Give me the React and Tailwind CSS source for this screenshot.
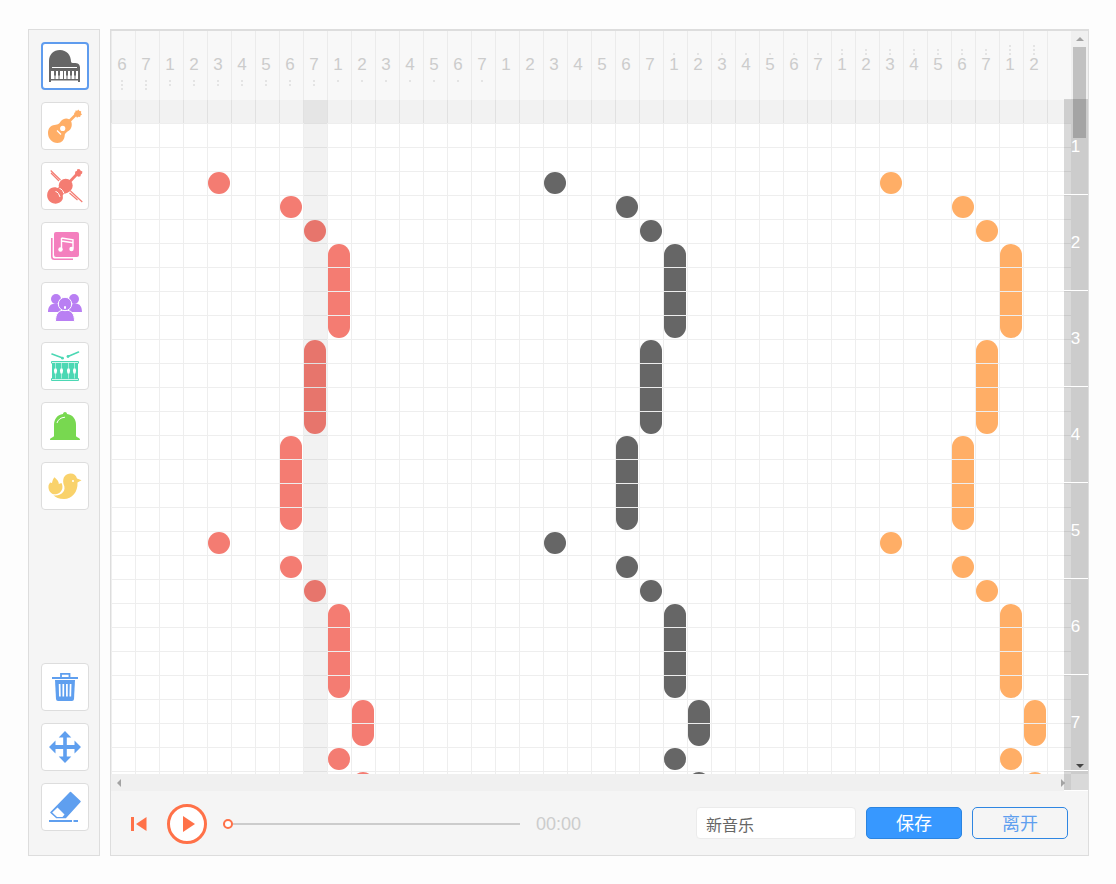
import React, { useState } from "react";

const VOICES = [
  { id: "violin", start: 4, fill: "bg-[#f47c72]" },
  { id: "piano", start: 18, fill: "bg-[#666666]" },
  { id: "guitar", start: 32, fill: "bg-[#ffae66]" },
];

// [column offset, row, length in rows]
const MELODY = [
  [0, 3, 1], [3, 4, 1], [4, 5, 1], [5, 6, 4], [4, 10, 4], [3, 14, 4],
  [0, 18, 1], [3, 19, 1], [4, 20, 1], [5, 21, 4], [6, 25, 2], [5, 27, 1], [6, 28, 1],
];

// Degrees of the scale, with the octave: negative below, positive above
const PITCHES = [
  ...[6, 7].map((n) => [n, -3]),
  ...[-2, -1, 0, 1, 2].flatMap((o) => [1, 2, 3, 4, 5, 6, 7].map((n) => [n, o])),
  ...[1, 2].map((n) => [n, 3]),
];

function Svg({ children, className }) {
  return (
    <svg viewBox="6 6 36 36" className={"size-9 shrink-0 " + className} fill="currentColor" aria-hidden="true">
      {children}
    </svg>
  );
}

const INSTRUMENTS = [
  {
    name: "钢琴",
    icon: (
      <Svg className="text-[#666]">
        <path d="M8 26V19C8 12.500 12.500 8 19 8S30 13 30 19.500C30 20.700 31 21 33 21C37 21 39 22.300 39 26Z" />
        <path d="M8 25h31v15h-2v-1.500H10V40H8Z" />
        <path fill="#fff" d="M11 25h25v1H11ZM10 29h27v8H10Z" />
        <path d="M13 29h2v4.500h-.5v4h-1v-4H13ZM17 29h2v4.500h-.5v4h-1v-4H17ZM22 29h1v8.500h-1ZM25 29h2v4.500h-.5v4h-1v-4H25ZM29 29h2v4.500h-.5v4h-1v-4H29ZM33 29h2v4.500h-.5v4h-1v-4H33Z" />
      </Svg>
    ),
  },
  {
    name: "吉他",
    icon: (
      <Svg className="text-[#ffae66]">
        <path d="M27 20.500l9-9" stroke="currentColor" strokeWidth="2.600" />
        <path d="M33 11l1.300-.7.2-1.800 1.800.2L37.200 7.500l1.300 1.500 1.700.3-.2 1.900 1 1.300-1.500 1-.4 1.500-1.700-.2-1.400 1-1-1.500-1.800-.5.3-1.500Z" />
        <path d="M20 19C22 16.500 25.500 15.800 28 17.200C31.300 19 31.600 24 29.500 27C27.500 29.800 24 30 23.700 33.500C23.500 38 20.500 41 16.500 41C11 41 7 36.500 7 31C7 26.500 9.500 23.500 13.500 23C17.500 22.600 18.500 21.500 20 19Z" />
        <circle cx="21.700" cy="26.400" r="2.600" fill="#fff" />
        <path d="M16 28.500l4 4" stroke="#fff" strokeWidth="1.200" />
      </Svg>
    ),
  },
  {
    name: "小提琴",
    icon: (
      <Svg className="text-[#f47c72]">
        <path d="M28 20.500l9-9.500" stroke="currentColor" strokeWidth="2.800" />
        <path d="M34 11.500l.3-2 1.500-.5.700-2 2.200.3 1 1.500 1.700.7-.3 2-1.300 1-.3 1.700-2 .5-1.500-.7Z" />
        <circle cx="24.700" cy="23.800" r="7" />
        <path d="M19 22C18.500 24.500 17.500 26.500 15.800 25.800C13.500 24.800 9.500 25.500 7.500 28.500C5 32.500 6 37.500 9.500 40C13.500 42.800 19.500 42 21.500 37.500C22.500 35 21 33.500 22.500 32.300C23.500 31.500 25.500 31.500 27 30.500Z" />
        <path d="M14.500 29.500l1.500.5 1.500 1.500 1.500 3.500M18.500 26.500l1.500.5 1.500 1.500 1.500 3" fill="none" stroke="#fff" strokeWidth="1" />
        <path d="M9.700 8.500l9.800 9.500M10 11l8 8M29.500 29L41.300 40M28.500 31l8 7" fill="none" stroke="currentColor" strokeWidth="1.200" />
      </Svg>
    ),
  },
  {
    name: "合成器",
    icon: (
      <Svg className="text-[#f47fbe]">
        <rect x="13" y="10" width="25" height="25" rx="2" />
        <path d="M10.800 16v18.500q0 2.700 2.700 2.700H32" fill="none" stroke="currentColor" strokeWidth="1.600" />
        <path d="M20.500 16l11.500 1.800v8.700M20.500 16v11.500M20.500 19l11.500 1.800" fill="none" stroke="#fff" strokeWidth="1.400" />
        <circle cx="19.500" cy="27.500" r="2.200" fill="#fff" />
        <circle cx="30.500" cy="27" r="2.200" fill="#fff" />
      </Svg>
    ),
  },
  {
    name: "合唱",
    icon: (
      <Svg className="text-[#b97ff3]">
        <circle cx="15" cy="17" r="5" />
        <circle cx="33" cy="17" r="5" />
        <path d="M7 30c0-5 2.500-8.500 7-8.500s8 3 8 8.500ZM27 30c0-5 3-8.500 7.500-8.500S41 25 41 30Z" />
        <path d="M14.500 39.500c0-8 3-11.500 9.500-11.500s9.500 3.500 9.500 11.500Z" stroke="#fff" strokeWidth="1" />
        <circle cx="24" cy="22" r="6.700" stroke="#fff" strokeWidth="1" />
        <rect x="23" y="24" width="2" height="3" rx="1" fill="#fff" />
      </Svg>
    ),
  },
  {
    name: "鼓",
    icon: (
      <Svg className="text-[#4cd8b4]">
        <path d="M11 12l10 3.800M27 14.500l10.500-4.500" stroke="currentColor" strokeWidth="1.600" strokeLinecap="round" />
        <circle cx="21.500" cy="16.200" r="1.400" />
        <circle cx="27" cy="14.500" r="1.400" />
        <path d="M11 19h26q1 0 1 1v1q0 .5-1 .5v14.500q1 0 1 1v1q0 1-1 1H11q-1 0-1-1v-1q0-1 1-1V21.500q-1 0-1-.5v-1q0-1 1-1Z" />
        <path d="M11 20h26v.8H11ZM11 37.200h26v.8H11Z" fill="#fff" />
        <path d="M14.500 21v15.500M20.500 21v15.500M27.500 21v15.500M33.500 21v15.500" stroke="#fff" strokeWidth=".5" />
        <path d="M13.500 26.500h2l.6 2-.6 3h-2l-.6-3ZM19.500 26.500h2l.6 2-.6 3h-2l-.6-3ZM26.500 26.500h2l.6 2-.6 3h-2l-.6-3ZM32.500 26.500h2l.6 2-.6 3h-2l-.6-3Z" fill="#fff" />
      </Svg>
    ),
  },
  {
    name: "铃",
    icon: (
      <Svg className="text-[#78d850]">
        <path d="M22 12c0-2.700 4-2.700 4 0 6 1 9 5 9 11v11c.5 2 4 1 4 4H9c0-3 3.500-2 4-4V23c0-6 3-10 9-11Z" />
        <path d="M16 21c.8-3 3.500-5.500 8-5.800" fill="none" stroke="#fff" strokeWidth="1" />
      </Svg>
    ),
  },
  {
    name: "鸟",
    icon: (
      <Svg className="text-[#f9d26b]">
        <path d="M22.500 22C21 15 25 11.500 29.500 11.500C33 11.500 35 13 36 16.500L40.500 18.300L36.500 20.500C37 30 31 37 23 37C18 37 14.500 35.500 12.500 33.300C20 34.500 26 29 22.500 22Z" />
        <path d="M9 20.500L11 21C11.500 18.500 12 17 13.500 15.300C16 17.500 18 19.500 17.800 22L20.500 21C23.200 26 20 31.800 15 32.300C10 32.800 7 28.500 7.500 24C7.600 22.500 8.500 22 9 20.500Z" />
        <circle cx="32" cy="19" r="1" fill="#fff" />
      </Svg>
    ),
  },
];

const TOOLS = [
  {
    name: "删除",
    icon: (
      <Svg className="text-[#5f9fef]">
        <path d="M20 14v-3.200h8.500V14M11 15h26" fill="none" stroke="currentColor" strokeWidth="1.800" />
        <path d="M14 17h20l-1 19q-.2 2-2 2H17q-1.800 0-2-2Z" />
        <path d="M18.600 21l.3 12.500M22.300 21v12.500M25.900 21v12.500M29.600 21l-.3 12.500" stroke="#fff" strokeWidth="1.700" />
      </Svg>
    ),
  },
  {
    name: "移动",
    icon: (
      <Svg className="text-[#5f9fef]">
        <path d="M24 8l6.300 6.500h-4.500V22h7.700v-4.500L40 24l-6.500 6.500V26h-7.700v7.500h4.500L24 40l-6.300-6.500h4.500V26h-7.700v4.500L8 24l6.500-6.500V22h7.700v-7.500h-4.500Z" />
      </Svg>
    ),
  },
  {
    name: "橡皮擦",
    icon: (
      <Svg className="text-[#5f9fef]">
        <path d="M29.500 9.500L39 18.500 24.500 34.500H15.500L10 29.500Z" stroke="currentColor" strokeWidth="1.600" strokeLinejoin="round" />
        <path d="M16.500 24.500l7 7-2 2.500h-5.500L11.200 29.500Z" fill="#fff" />
        <path d="M8 38h23M32.500 38H37" stroke="currentColor" strokeWidth="1.800" />
      </Svg>
    ),
  },
];

function IconButton({ name, selected, onClick, children }) {
  return (
    <button
      type="button"
      aria-label={name}
      aria-pressed={selected}
      onClick={onClick}
      className={
        "flex size-12 items-center justify-center rounded bg-white " +
        (selected ? "border-2 border-[#5f9cee]" : "border border-[#dddddd]")
      }
    >
      {children}
    </button>
  );
}

function Dots({ count }) {
  return Array.from({ length: count }, (_, i) => (
    <span key={i} className="size-[2px] rounded-full bg-[#dedede]" />
  ));
}

function Pitch({ degree, octave }) {
  return (
    <div className="flex flex-col items-center border-l border-[#ebebeb] pr-[3px]">
      <div className="flex h-6 flex-col justify-end gap-[2px]">
        <Dots count={Math.max(octave, 0)} />
      </div>
      <span className="h-[25px] text-center text-[17px] leading-5">{degree}</span>
      <div className="flex flex-col gap-[2px]">
        <Dots count={Math.max(-octave, 0)} />
      </div>
    </div>
  );
}

function Measures() {
  return (
    <div className="pointer-events-none absolute right-0 top-[68px] bottom-0 w-6 overflow-hidden bg-black/15">
      <ol className="text-center text-[17px] text-white">
        {[1, 2, 3, 4, 5, 6, 7].map((n) => (
          <li key={n} className="flex h-24 items-center justify-center border-b border-white pr-px">
            {n}
          </li>
        ))}
      </ol>
      <div className="h-5 border-b border-white" />
    </div>
  );
}

export default function App() {
  const [instrument, setInstrument] = useState(0);
  const [title, setTitle] = useState("新音乐");
  return (
    <div className="flex h-screen min-h-[640px] gap-[10px] bg-[#fdfdfd] pt-[29px] pr-[27px] pb-7 pl-7 font-['Liberation_Sans','Noto_Sans_CJK_SC',sans-serif]">
      <aside className="flex w-[72px] shrink-0 flex-col justify-between border border-[#dddddd] bg-[#f5f5f5] pt-3 pb-6 pl-3">
        <div className="flex flex-col gap-3">
          {INSTRUMENTS.map((item, i) => (
            <IconButton key={item.name} name={item.name} selected={i === instrument} onClick={() => setInstrument(i)}>
              {item.icon}
            </IconButton>
          ))}
        </div>
        <div className="flex flex-col gap-3">
          {TOOLS.map((item) => (
            <IconButton key={item.name} name={item.name}>
              {item.icon}
            </IconButton>
          ))}
        </div>
      </aside>

      <main className="flex min-w-0 flex-1 flex-col border border-t-2 border-[#dddddd] bg-[#f5f5f5]">
        <div className="relative flex min-h-0 flex-1">
          <div className="flex min-w-0 flex-1 flex-col">
            <section className="flex min-h-0 flex-1 flex-col overflow-hidden bg-white">
              <header className="grid h-[69px] shrink-0 grid-cols-[repeat(40,24px)] bg-[#f8f8f8] text-[#cccccc]">
                {PITCHES.map(([n, o]) => (
                  <Pitch key={n + "/" + o} degree={n} octave={o} />
                ))}
                <div className="border-l border-[#ebebeb]" />
              </header>
              <div className="relative min-h-0 flex-1 overflow-hidden">
                <div className="grid auto-rows-[24px] grid-cols-[repeat(40,24px)]">
                  {VOICES.map((v) =>
                    MELODY.map(([c, r, len]) => (
                      <div
                        key={v.id + r}
                        className={"mx-px mb-[2px] rounded-full " + v.fill}
                        style={{ gridColumn: v.start + c + 1, gridRow: `${r + 1} / span ${len}` }}
                      />
                    ))
                  )}
                </div>
                <div className="absolute inset-0 bg-[linear-gradient(to_right,#eeeeee_1px,transparent_1px),linear-gradient(to_bottom,transparent_23px,#eeeeee_23px)] bg-[size:24px_24px]" />
                <div className="absolute inset-x-0 top-0 h-[23px] bg-black/5" />
                <div className="absolute inset-y-0 left-[193px] w-[23px] bg-black/5" />
              </div>
            </section>
            <div className="flex h-[17px] shrink-0 items-center justify-between bg-[#f0f0f0] px-[6px] text-[#a3a3a3]">
              <svg viewBox="0 0 4 8" className="h-2 w-1" fill="currentColor" aria-hidden="true"><path d="M4 0v8L0 4Z" /></svg>
              <svg viewBox="0 0 4 8" className="h-2 w-1" fill="currentColor" aria-hidden="true"><path d="M0 0v8l4-4Z" /></svg>
            </div>
          </div>
          <div className="flex w-[17px] shrink-0 flex-col">
            <div className="flex min-h-0 flex-1 flex-col items-center bg-[#f0f0f0] pb-[6px]">
              <svg viewBox="0 0 8 4" className="mt-[6px] mb-[6px] h-1 w-2 text-[#a3a3a3]" fill="currentColor" aria-hidden="true"><path d="M0 4h8L4 0Z" /></svg>
              <div className="h-[91px] w-[13px] bg-[#c1c1c1]" />
              <svg viewBox="0 0 8 4" className="mt-auto h-1 w-2 text-[#505050]" fill="currentColor" aria-hidden="true"><path d="M0 0h8L4 4Z" /></svg>
            </div>
            <div className="h-[17px] bg-white" />
          </div>
          <Measures />
        </div>

        <footer className="flex h-16 shrink-0 items-center justify-between px-5">
          <div className="flex items-center pt-[2px]">
            <button type="button" aria-label="回到开头" className="text-[#ff7148]">
              <svg viewBox="0 0 16 14" className="h-[14px] w-4" fill="currentColor" aria-hidden="true">
                <path d="M0 0h3v14H0ZM15.500 0v14L5 7Z" />
              </svg>
            </button>
            <button type="button" aria-label="播放" className="ml-5 flex size-10 items-center justify-center rounded-full border-3 border-[#ff7148] bg-white text-[#ff7148]">
              <svg viewBox="0 0 12 16" className="ml-1 h-4 w-3" fill="currentColor" aria-hidden="true"><path d="M0 0l12 8-12 8Z" /></svg>
            </button>
            <input
              type="range"
              aria-label="播放进度"
              min="0"
              max="100"
              defaultValue="0"
              className="ml-4 h-[10px] w-[297px] appearance-none bg-[linear-gradient(#cccccc,#cccccc)] bg-[size:100%_2px] bg-center bg-no-repeat [&::-webkit-slider-thumb]:size-[10px] [&::-webkit-slider-thumb]:appearance-none [&::-webkit-slider-thumb]:rounded-full [&::-webkit-slider-thumb]:border-2 [&::-webkit-slider-thumb]:border-solid [&::-webkit-slider-thumb]:border-[#ff7148] [&::-webkit-slider-thumb]:bg-white"
            />
            <output className="ml-4 text-lg leading-6 text-[#cccccc]">00:00</output>
          </div>
          <div className="flex items-center gap-[10px]">
            <input
              type="text"
              aria-label="曲名"
              value={title}
              onChange={(e) => setTitle(e.target.value)}
              className="h-8 w-40 rounded border border-[#ebebeb] bg-white px-[9px] pt-[2px] text-base text-[#666666]"
            />
            <button type="button" className="h-8 w-24 rounded-[5px] border border-[#2b84e0] bg-[#3798ff] pt-[2px] text-lg leading-7 text-white">
              保存
            </button>
            <button type="button" className="h-8 w-24 rounded-[5px] border border-[#2f86e2] pt-[2px] text-lg leading-7 text-[#5f9fef]">
              离开
            </button>
          </div>
        </footer>
      </main>
    </div>
  );
}
